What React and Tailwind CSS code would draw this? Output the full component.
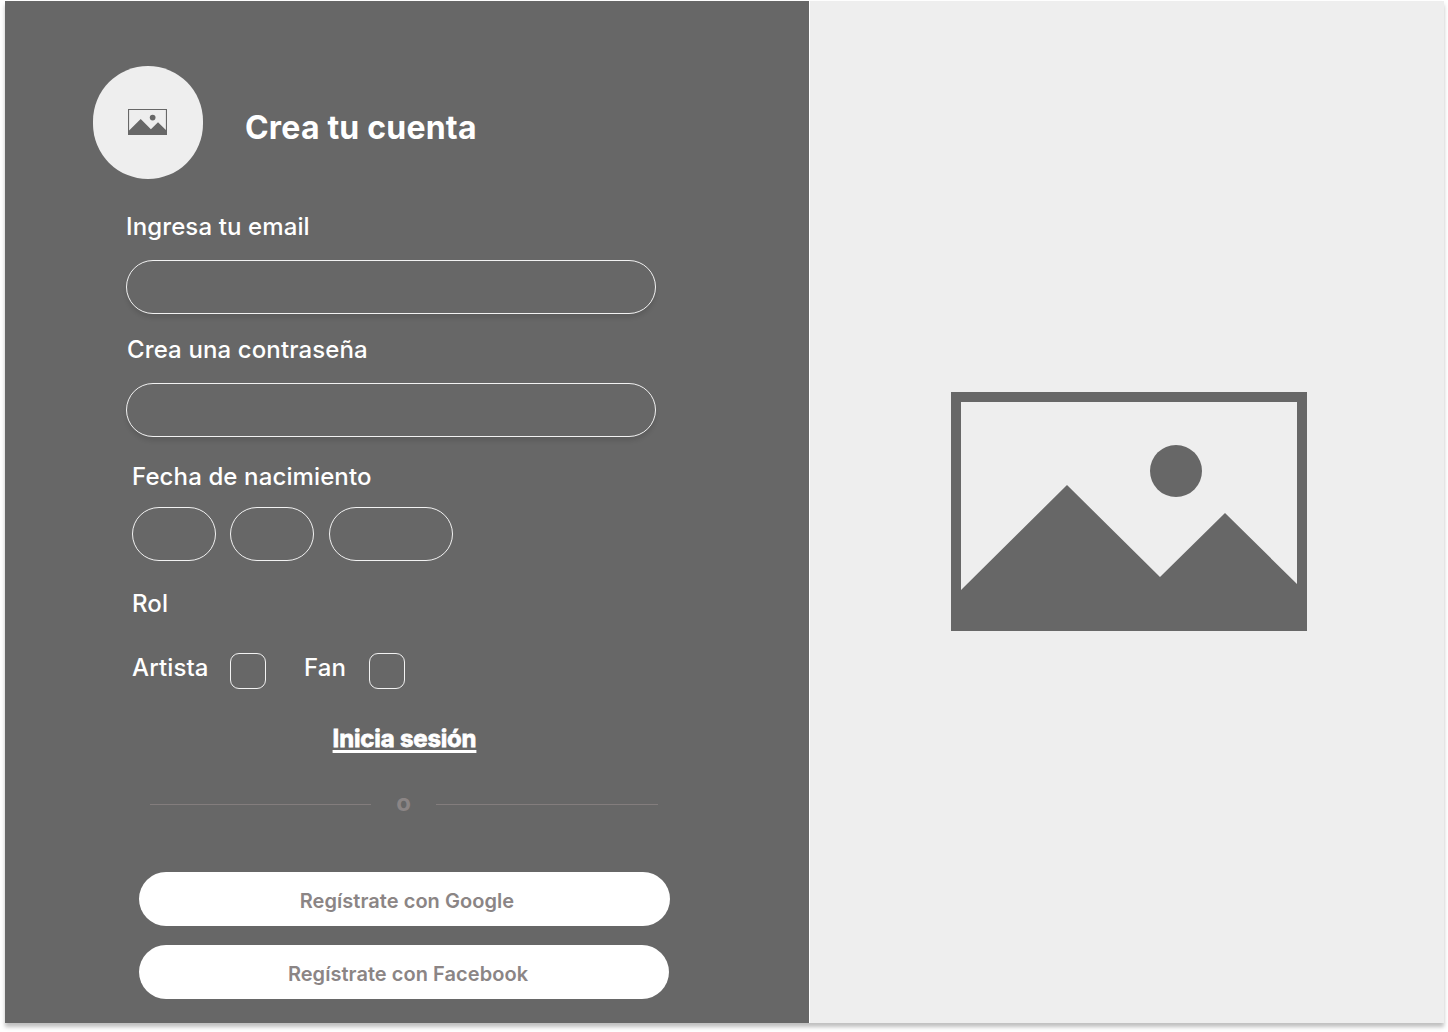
import React from "react";

const ImageIcon = ({ className }) => (
  <svg viewBox="0 0 356 239" className={className}>
    <path
      fillRule="evenodd"
      fill="#676767"
      d="M0 0H356V239H0ZM10 10V198L116 93L209 185L274 121L346 192V10Z"
    />
    <circle cx="225" cy="79" r="26" fill="#676767" />
  </svg>
);

const Pill = ({ className }) => (
  <div
    className={`h-[54px] rounded-[27px] border border-[#f2f2f2] ${className}`}
  />
);

const Check = () => (
  <div className="w-[36px] h-[36px] rounded-[9px] border border-[#f2f2f2]" />
);

const Label = ({ className, children }) => (
  <div className={`text-[24px] leading-[29px] font-medium tracking-[0.12px] text-white ${className}`}>
    {children}
  </div>
);

export default function App() {
  return (
    <div className="min-h-screen bg-white pl-[5px] pt-px font-['Inter',sans-serif]">
      <div className="flex w-[1439px] h-[1022px] shadow-[0_4px_4px_rgba(0,0,0,0.25)]">
        <div className="w-[804px] bg-[#676767] flex flex-col pt-[65px]">
          <div className="flex items-center ml-[88px]">
            <div className="w-[110px] h-[113px] rounded-full bg-[#eeeeee] flex items-center justify-center">
              <ImageIcon className="w-[39px] h-[28px] -ml-[1px] -mt-[1px]" />
            </div>
            <h1 className="ml-[42px] mt-[9px] text-[32px] leading-[39px] font-bold tracking-[0.2px] text-white">
              Crea tu cuenta
            </h1>
          </div>

          <Label className="ml-[121px] mt-[33px]">Ingresa tu email</Label>
          <Pill className="ml-[121px] mt-[19px] w-[530px] shadow-[0_4px_4px_rgba(0,0,0,0.1)]" />

          <Label className="ml-[122px] mt-[21px]">Crea una contraseña</Label>
          <Pill className="ml-[121px] mt-[19px] w-[530px] shadow-[0_4px_4px_rgba(0,0,0,0.1)]" />

          <Label className="ml-[127px] mt-[25px]">Fecha de nacimiento</Label>
          <div className="flex gap-[14px] ml-[127px] mt-[16px]">
            <Pill className="w-[84px]" />
            <Pill className="w-[84px]" />
            <Pill className="w-[124px] ml-px" />
          </div>

          <Label className="ml-[127px] mt-[28px]">Rol</Label>

          <div className="flex items-center ml-[127px] mt-[35px] h-[36px]">
            <Label className="w-[79px] -mt-[7px]">Artista</Label>
            <div className="ml-[19px]">
              <Check />
            </div>
            <Label className="w-[42px] ml-[38px] -mt-[7px]">Fan</Label>
            <div className="ml-[23px]">
              <Check />
            </div>
          </div>

          <div className="mt-[35px] text-center h-[30px] pr-[5px]">
            <a className="text-[24px] leading-[30px] font-bold tracking-[-0.15px] text-white underline decoration-[3px] underline-offset-[3px] [-webkit-text-stroke:0.8px_white]">
              Inicia sesión
            </a>
          </div>

          <div className="flex items-center ml-[145px] w-[508px] mt-[35px] h-[30px]">
            <div className="w-[221px] h-px bg-[#837d7d]" />
            <div className="flex-1 text-center text-[24px] leading-[24px] font-bold text-[#8b8585] -mt-[3px]">
              o
            </div>
            <div className="w-[222px] h-px bg-[#837d7d]" />
          </div>

          <button className="ml-[134px] mt-[53px] w-[531px] h-[54px] rounded-[27px] bg-white pl-[5px] pt-[3px] text-[20px] font-semibold tracking-[0.05px] text-[#8b8585]">
            Regístrate con Google
          </button>
          <button className="ml-[134px] mt-[19px] w-[530px] h-[54px] rounded-[27px] bg-white pl-[8px] pt-[3px] text-[20px] font-semibold tracking-[0.05px] text-[#8b8585]">
            Regístrate con Facebook
          </button>
        </div>

        <div className="flex-1 ml-px bg-[#eeeeee] flex items-center justify-center pl-[3px] pb-[2px]">
          <ImageIcon className="w-[356px] h-[239px]" />
        </div>
      </div>
    </div>
  );
}
